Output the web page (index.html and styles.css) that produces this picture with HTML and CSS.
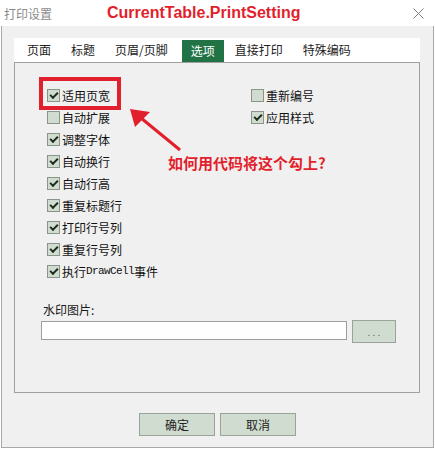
FILE: index.html
```html
<!DOCTYPE html>
<html lang="zh-CN">
<head>
    <meta charset="UTF-8">
    <title>打印设置</title>
    <link rel="stylesheet" href="styles.css">
</head>
<body>
    <div class="window">
        <div class="titlebar">
            <span class="title">打印设置</span>
            <span class="title-note">CurrentTable.PrintSetting</span>
            <span class="close">
                <svg width="11" height="11" viewBox="0 0 11 11"><path d="M0.5 0.5 L10.5 10.5 M10.5 0.5 L0.5 10.5" stroke="#808080" stroke-width="1" fill="none"/></svg>
            </span>
        </div>

        <div class="dialog">
            <div class="tabs">
                <span class="tab">页面</span>
                <span class="tab">标题</span>
                <span class="tab">页眉/页脚</span>
                <span class="tab active">选项</span>
                <span class="tab">直接打印</span>
                <span class="tab">特殊编码</span>
            </div>

            <div class="panel">
                <div class="options">
                    <div class="col col-left">
                        <div class="check on"><span class="box"></span>适用页宽</div>
                        <div class="check"><span class="box"></span>自动扩展</div>
                        <div class="check on"><span class="box"></span>调整字体</div>
                        <div class="check on"><span class="box"></span>自动换行</div>
                        <div class="check on"><span class="box"></span>自动行高</div>
                        <div class="check on"><span class="box"></span>重复标题行</div>
                        <div class="check on"><span class="box"></span>打印行号列</div>
                        <div class="check on"><span class="box"></span>重复行号列</div>
                        <div class="check on"><span class="box"></span>执行<span class="mono">DrawCell</span>事件</div>
                    </div>
                    <div class="col">
                        <div class="check"><span class="box"></span>重新编号</div>
                        <div class="check on"><span class="box"></span>应用样式</div>
                    </div>
                </div>

                <div class="watermark">
                    <div class="wm-label">水印图片:</div>
                    <div class="wm-row">
                        <div class="wm-input"></div>
                        <div class="wm-btn">. . .</div>
                    </div>
                </div>
            </div>

            <div class="actions">
                <button class="btn">确定</button>
                <button class="btn">取消</button>
            </div>
        </div>

        <!-- 标注 -->
        <div class="highlight"></div>
        <svg class="arrow" width="60" height="50" viewBox="125 105 60 50">
            <line x1="180" y1="150" x2="141" y2="118" stroke="#e21f2d" stroke-width="3"/>
            <polygon points="130,109 150,112 135,127" fill="#e21f2d"/>
        </svg>
        <div class="note">如何用代码将这个勾上?</div>
    </div>
</body>
</html>
```

FILE: styles.css
```css
body {
    margin: 0;
    font-family: "Noto Sans CJK SC", "Noto Sans", sans-serif;
    font-size: 12px;
    color: #1a1a1a;
    background: #f0f0f0;
}
.window {
    position: relative;
    width: 435px;
    height: 449px;
    background: #fff;
    overflow: hidden;
}
.titlebar {
    height: 26px;
    display: flex;
    align-items: center;
    padding: 0 11px 0 4px;
    background: #fff;
}
.title {
    color: #8a8a8a;
    font-size: 12px;
}
.title-note {
    margin-left: 55px;
    font-family: "Liberation Sans", Arial, sans-serif;
    font-weight: bold;
    font-size: 16px;
    color: #e21f2d;
}
.close {
    margin-left: auto;
    display: flex;
}
.dialog {
    height: 422px;
    box-sizing: border-box;
    margin: 0 1px;
    border: 1px solid #a8a8a8;
    border-top: none;
    background: #f0f0f0;
    padding: 12px 0 0 12px;
}
.tabs {
    width: 406px;
    height: 24px;
    background: #fff;
    display: flex;
    gap: 2px;
    padding-left: 4px;
    box-sizing: border-box;
}
.tab {
    padding: 0 9px;
    line-height: 24px;
    font-size: 12px;
    color: #222;
}
.tab.active {
    margin: 2px 0 0 3px;
    line-height: 22px;
    background: #217346;
    color: #fff;
}
.panel {
    width: 406px;
    height: 331px;
    box-sizing: border-box;
    border: 1px solid #a0a0a0;
    padding: 21px 0 0 32px;
}
.options {
    display: flex;
}
.col-left {
    width: 204px;
}
.check {
    height: 22px;
    display: flex;
    align-items: center;
    font-size: 12px;
    color: #111;
}
.box {
    width: 13px;
    height: 13px;
    box-sizing: border-box;
    border: 1px solid #8a958a;
    background: #cfdccf;
    margin-right: 2px;
    display: flex;
    align-items: center;
    justify-content: center;
}
.check.on .box::after {
    content: "";
    width: 6px;
    height: 3px;
    border-left: 2px solid #1d2b1d;
    border-bottom: 2px solid #1d2b1d;
    transform: translate(0, -1px) rotate(-45deg);
}
.mono {
    font-family: "Liberation Mono", "Courier New", monospace;
    font-size: 11px;
    letter-spacing: -0.6px;
}
.watermark {
    margin: 20px 0 0 -6px;
}
.wm-label {
    padding-left: 2px;
    line-height: 16px;
    font-size: 12px;
}
.wm-row {
    display: flex;
    gap: 5px;
    margin-top: 2px;
}
.wm-input {
    width: 306px;
    height: 19px;
    margin-top: 1px;
    box-sizing: border-box;
    border: 1px solid #9aa09a;
    background: #fff;
}
.wm-btn {
    width: 44px;
    height: 23px;
    box-sizing: border-box;
    border: 1px solid #9aa39a;
    background: #cfdccf;
    color: #666;
    font-size: 10px;
    line-height: 21px;
    text-align: center;
}
.actions {
    display: flex;
    justify-content: center;
    gap: 5px;
    margin-top: 20px;
    padding-right: 12px;
}
.btn {
    width: 76px;
    height: 23px;
    border: 1px solid #9aa39a;
    background: #cfdccf;
    font-family: "Noto Sans CJK SC", sans-serif;
    font-size: 12px;
    color: #222;
    padding: 0;
}
.highlight {
    position: absolute;
    left: 39px;
    top: 77px;
    width: 82px;
    height: 33px;
    box-sizing: border-box;
    border: 4px solid #e21f2d;
}
.arrow {
    position: absolute;
    left: 125px;
    top: 105px;
}
.note {
    position: absolute;
    left: 168px;
    top: 153px;
    font-size: 15px;
    font-weight: bold;
    line-height: 20px;
    color: #e21f2d;
}
```
